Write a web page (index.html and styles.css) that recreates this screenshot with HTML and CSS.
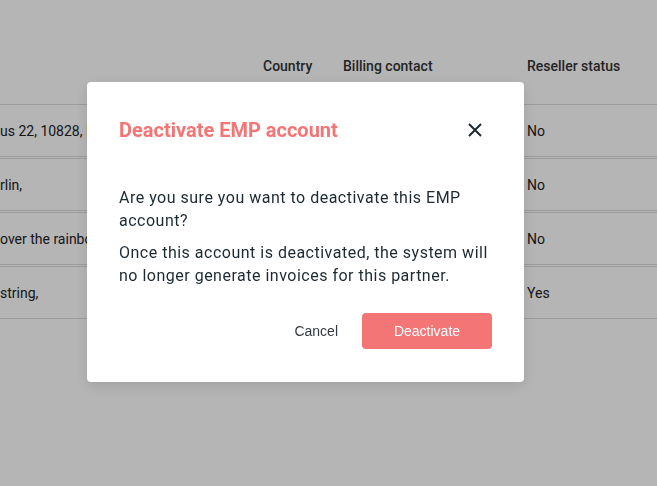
FILE: index.html
```html
<!DOCTYPE html>
<html lang="en">
<head>
    <meta charset="UTF-8">
    <meta name="viewport" content="width=device-width, initial-scale=1.0">
    <title>Partners</title>
    <link rel="stylesheet" href="styles.css">
</head>
<body>
    <div class="partners">
        <div class="row header">
            <div></div>
            <div>Country</div>
            <div>Billing contact</div>
            <div>Reseller status</div>
        </div>
        <div class="row">
            <div>us 22, 10828, Berlin,</div>
            <div></div>
            <div></div>
            <div>No</div>
        </div>
        <div class="row">
            <div>rlin,</div>
            <div></div>
            <div></div>
            <div>No</div>
        </div>
        <div class="row">
            <div>over the rainbow,</div>
            <div></div>
            <div></div>
            <div>No</div>
        </div>
        <div class="row">
            <div>string,</div>
            <div></div>
            <div></div>
            <div>Yes</div>
        </div>
    </div>

    <div class="overlay">
        <div class="modal">
            <div class="modal-header">
                <h2>Deactivate EMP account</h2>
                <button class="close-button" aria-label="Close">
                    <svg width="14" height="14" viewBox="0 0 14 14">
                        <path d="M1 1L13 13M13 1L1 13" stroke="#1c2a30" stroke-width="2" fill="none"/>
                    </svg>
                </button>
            </div>
            <div class="modal-body">
                <p>Are you sure you want to deactivate this EMP account?</p>
                <p>Once this account is deactivated, the system will no longer generate invoices for this partner.</p>
            </div>
            <div class="modal-actions">
                <button class="cancel-button">Cancel</button>
                <button class="deactivate-button">Deactivate</button>
            </div>
        </div>
    </div>
</body>
</html>
```

FILE: styles.css
```css
body {
    font-family: Roboto, sans-serif;
    background-color: #ffffff;
    color: #222222;
    margin: 0;
    font-size: 14px;
}

.partners {
    width: 100%;
}

.row {
    display: grid;
    grid-template-columns: 263px 80px 184px 1fr;
    align-items: center;
    height: 51px;
    border-bottom: 1px solid #dcdcdc;
    white-space: nowrap;
}

.row + .row {
    border-top: 1px solid #dcdcdc;
    margin-top: 1px;
}

.row.header {
    height: 105px;
    align-items: start;
    box-sizing: border-box;
    padding-top: 58px;
    font-weight: 500;
    color: #333333;
}

.header + .row {
    border-top: none;
    margin-top: 0;
}

.overlay {
    position: fixed;
    inset: 0;
    background-color: rgba(0, 0, 0, 0.29);
    display: flex;
    align-items: flex-start;
    padding: 82px 0 0 87px;
}

.modal {
    background-color: #ffffff;
    width: 437px;
    box-sizing: border-box;
    padding: 36px 32px 33px;
    border-radius: 4px;
    box-shadow: 0 4px 14px rgba(0, 0, 0, 0.12);
}

.modal-header {
    display: flex;
    justify-content: space-between;
    align-items: center;
    height: 24px;
}

.modal-header h2 {
    margin: 0;
    font-size: 20px;
    font-weight: 700;
    color: #f47575;
}

.close-button {
    width: 34px;
    height: 34px;
    border: none;
    background: none;
    padding: 0;
    display: flex;
    justify-content: center;
    align-items: center;
    cursor: pointer;
}

.modal-body {
    margin-top: 44px;
}

.modal-body p {
    margin: 0 0 9px;
    font-size: 16px;
    line-height: 23px;
    letter-spacing: 0.5px;
    color: #1d2a31;
}

.modal-body p:last-child {
    margin-bottom: 0;
}

.modal-actions {
    display: flex;
    justify-content: flex-end;
    align-items: center;
    gap: 24px;
    margin-top: 26px;
}

.cancel-button {
    background: none;
    border: none;
    padding: 0;
    font-family: "Liberation Sans", Arial, sans-serif;
    font-size: 14px;
    color: #333a3f;
    cursor: pointer;
}

.deactivate-button {
    width: 130px;
    height: 36px;
    border: none;
    border-radius: 4px;
    background-color: #f47575;
    color: #ffffff;
    font-family: "Liberation Sans", Arial, sans-serif;
    font-size: 14px;
    cursor: pointer;
}
```
